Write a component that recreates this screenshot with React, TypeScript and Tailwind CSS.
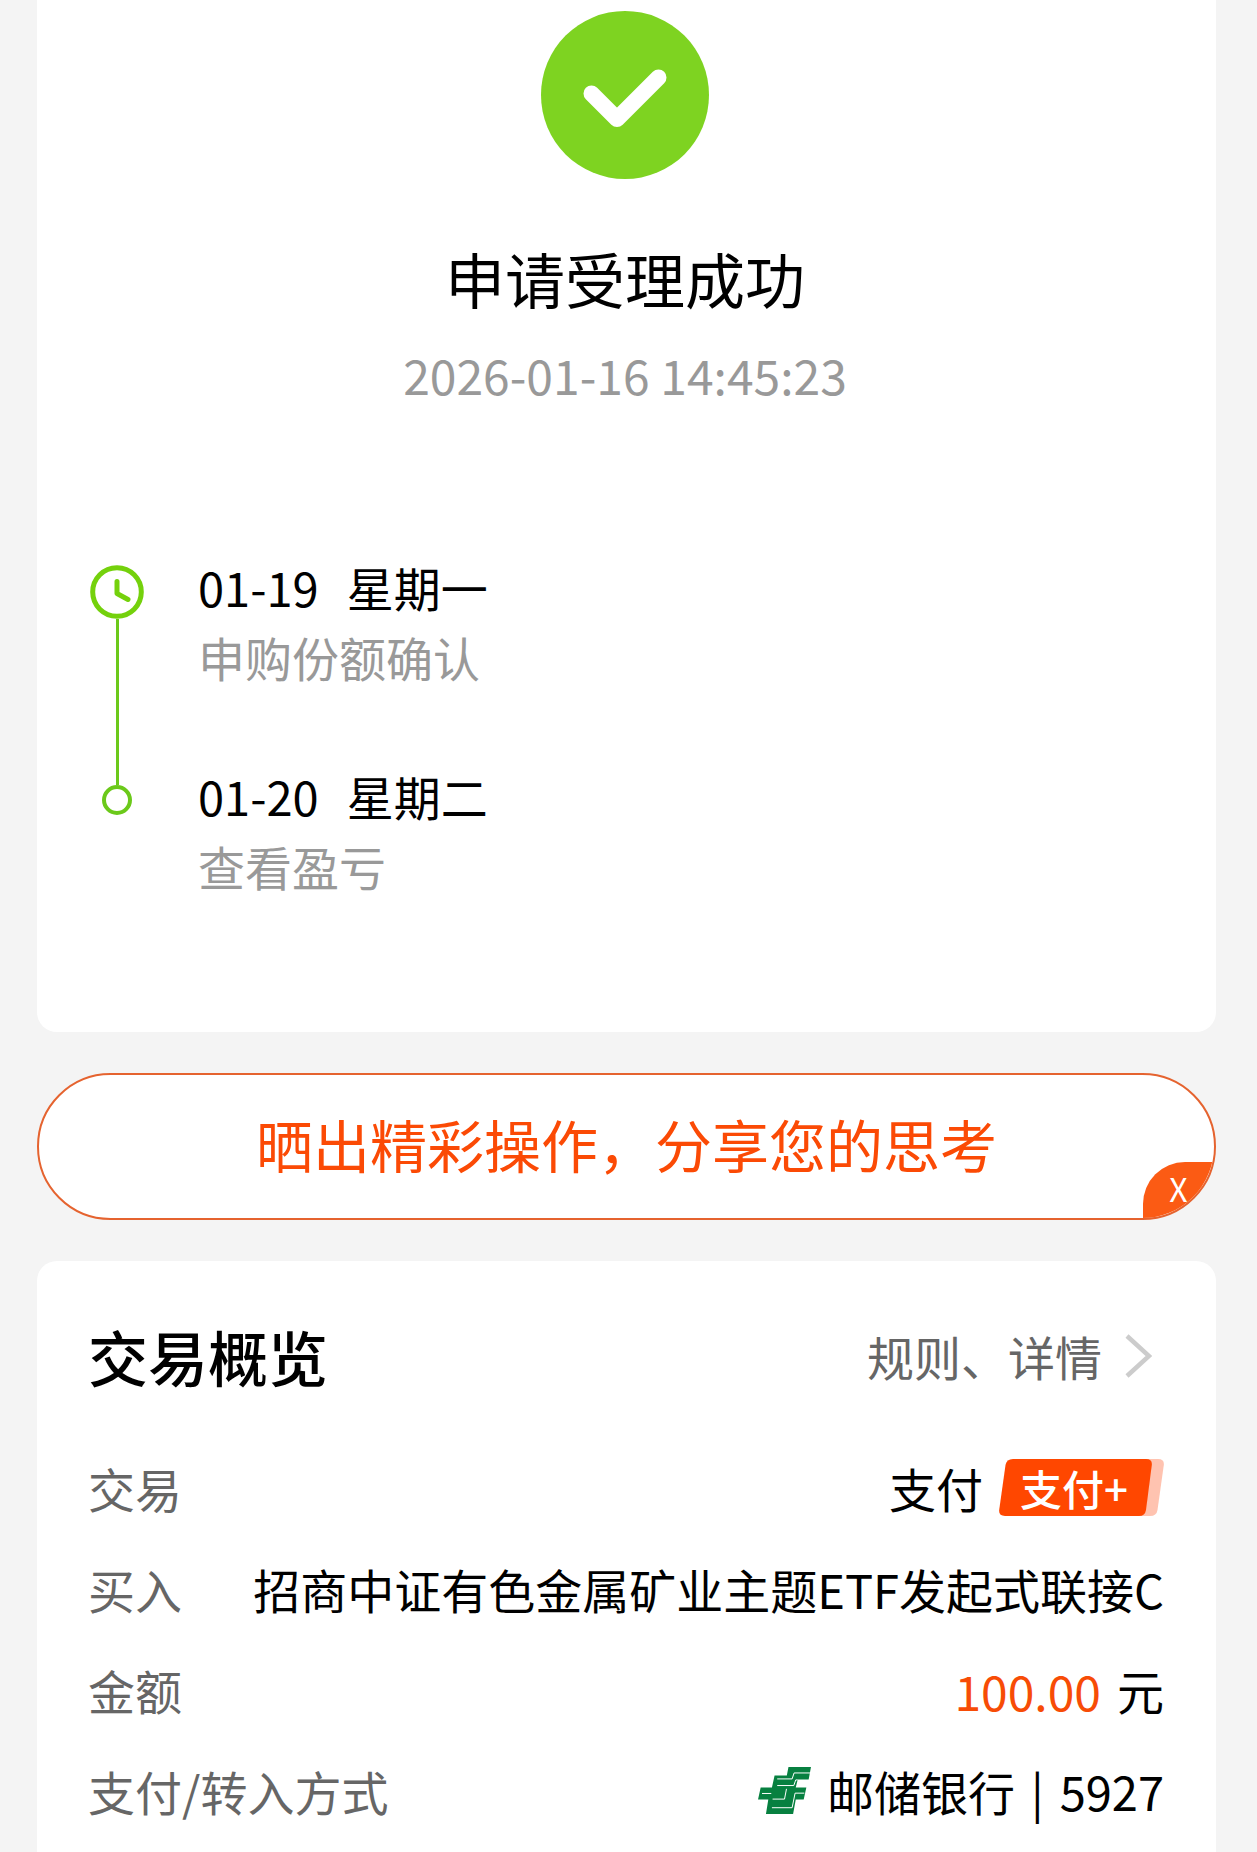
import type { ReactNode } from 'react';

const steps = [
  { date: '01-19', day: '星期一', text: '申购份额确认' },
  { date: '01-20', day: '星期二', text: '查看盈亏' },
];

function SuccessIcon() {
  return (
    <svg className="h-[168px] w-[168px]" viewBox="0 0 168 168" fill="none">
      <circle cx="84" cy="84" r="84" fill="#7ed321" />
      <path
        d="M50.5 82.5 L76 108 L117.5 66.5"
        stroke="#fff"
        strokeWidth="16"
        strokeLinecap="round"
        strokeLinejoin="round"
      />
    </svg>
  );
}

function ClockIcon() {
  return (
    <svg className="h-[54px] w-[54px]" viewBox="0 0 54 54" fill="none" stroke="#74d10c">
      <circle cx="27" cy="27" r="24.3" strokeWidth="5" />
      <path d="M27 16.5 V28.5 L38 34.5" strokeWidth="5" strokeLinecap="round" strokeLinejoin="round" />
    </svg>
  );
}

function PostBankLogo() {
  return (
    <svg className="h-[47px] w-[53px]" viewBox="20 20 160 142">
      <path
        fill="#078040"
        d="M112 20H180L173 58H140L134 82H166L158 118H134L126 162H44L51 118H20L28 82H62L70 46H107Z"
      />
      <g fill="none" stroke="#fff" strokeWidth="3">
        <path d="M178 38H129L123 56H78" />
        <path d="M140 59H134L128 76H78" />
        <path d="M32 100H60" />
        <path d="M106 86L100 117H64" />
        <path d="M160 99H132L123 143H62" />
      </g>
    </svg>
  );
}

function PayBadge() {
  return (
    <span className="relative flex h-[57px] w-[165px] items-center pl-[21px]">
      <svg className="absolute inset-0 h-full w-full" viewBox="0 0 165 57">
        <path
          fill="#ffc3b0"
          d="M130 0H159Q165.500 0 164.800 6L158.500 51Q157.500 57 151 57H130Z"
        />
        <path
          fill="#ff4700"
          d="M14 0H147Q153.500 0 152.800 6L147 51Q146 57 140 57H6Q-.5 57 .2 51L6.500 6Q7.500 0 14 0Z"
        />
      </svg>
      <span className="relative text-[42px] leading-[52px] font-medium text-white">支付+</span>
    </span>
  );
}

function Row({ label, children }: { label: string; children: ReactNode }) {
  return (
    <div className="flex h-[101px] items-center justify-between">
      <dt className="shrink-0 text-[#666]">{label}</dt>
      <dd className="flex items-center gap-4 whitespace-nowrap">{children}</dd>
    </div>
  );
}

export default function App() {
  return (
    <main className="min-h-screen bg-[#f4f4f4] pr-[41px] pl-[37px] font-['Noto_Sans_CJK_SC',sans-serif] text-[47px] leading-[70px] text-black">
      {/* Resultado */}
      <section className="rounded-b-[20px] bg-white pt-[11px] pr-[54px] pb-[131px] pl-[51px]">
        <div className="flex flex-col items-center">
          <SuccessIcon />
          <h1 className="mt-[63px] text-[60px] leading-[72px]">申请受理成功</h1>
          <time className="mt-[30px] text-[48px] leading-[60px] text-[#999]">2026-01-16 14:45:23</time>
        </div>

        <div className="mt-[148px] flex gap-[52px]">
          <div className="flex w-[58px] flex-col items-center pt-[13px] pb-[86px]">
            <ClockIcon />
            <span className="w-[3px] flex-1 bg-[#6bc91a]" />
            <span className="h-[30px] w-[30px] rounded-full border-4 border-[#6bc91a]" />
          </div>
          <ol className="flex flex-col gap-[69px]">
            {steps.map((step) => (
              <li key={step.date}>
                <p className="flex gap-7">
                  <span>{step.date}</span>
                  <span>{step.day}</span>
                </p>
                <p className="text-[#999]">{step.text}</p>
              </li>
            ))}
          </ol>
        </div>
      </section>

      <div className="relative mt-[41px] overflow-hidden rounded-full border-2 border-[#e5632f] bg-white">
        <button type="button" className="block h-[143px] w-full pb-2 text-[57px] text-[#fb4a05]">
          晒出精彩操作，分享您的思考
        </button>
        <button
          type="button"
          className="absolute right-0 bottom-0 h-[56px] w-[71px] rounded-tl-[42px] bg-[#fb5b14] pb-1 text-[32px] leading-[52px] text-white"
        >
          X
        </button>
      </div>

      <section className="mt-[41px] rounded-t-[20px] bg-white pt-[59px] pr-[52px] pb-4 pl-[51px]">
        <div className="flex items-center justify-between">
          <h2 className="text-[60px] leading-[72px] font-medium">交易概览</h2>
          <a href="#detail" className="flex items-center gap-[23px] pr-3 text-[#666]">
            规则、详情
            <svg className="h-[44px] w-[27px]" viewBox="0 0 27 44" fill="none" stroke="#ccc" strokeWidth="4.500">
              <path d="M2 2 L24 22 L2 42" />
            </svg>
          </a>
        </div>

        <dl className="mt-[45px]">
          <Row label="交易">
            <span>支付</span>
            <PayBadge />
          </Row>
          <Row label="买入">招商中证有色金属矿业主题ETF发起式联接C</Row>
          <Row label="金额">
            <span className="text-[48px] text-[#f74c06]">100.00</span>
            <span>元</span>
          </Row>
          <Row label="支付/转入方式">
            <PostBankLogo />
            <span>邮储银行</span>
            <span>|</span>
            <span>5927</span>
          </Row>
        </dl>
      </section>
    </main>
  );
}
